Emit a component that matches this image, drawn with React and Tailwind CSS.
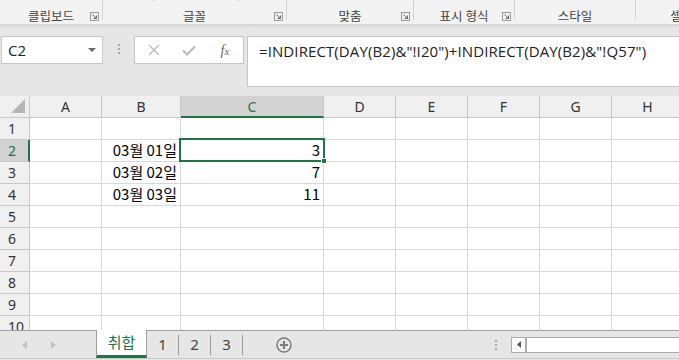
import React from 'react';

const COLS = [
  { key: 'A', w: 'w-[72px]' },
  { key: 'B', w: 'w-[79px]' },
  { key: 'C', w: 'w-[143px]' },
  { key: 'D', w: 'w-[72px]' },
  { key: 'E', w: 'w-[72px]' },
  { key: 'F', w: 'w-[72px]' },
  { key: 'G', w: 'w-[72px]' },
  { key: 'H', w: 'w-[72px]' },
];

const DATA = {
  2: { B: '03월 01일', C: '3' },
  3: { B: '03월 02일', C: '7' },
  4: { B: '03월 03일', C: '11' },
};

const GROUPS = [
  { label: '클립보드', w: 'w-[103px]', launcher: true },
  { label: '글꼴', w: 'w-[184px]', launcher: true },
  { label: '맞춤', w: 'w-[127px]', launcher: true },
  { label: '표시 형식', w: 'w-[101px]', launcher: true },
  { label: '스타일', w: 'w-[121px]', launcher: false },
  { label: '셀', w: 'w-[80px]', launcher: false },
];

const kr = { fontFamily: '"Noto Sans CJK KR", "Noto Sans", sans-serif' };

function Launcher() {
  return (
    <svg width="9" height="9" viewBox="0 0 9 9" className="absolute right-[3px] top-[12px]">
      <rect x="0.5" y="0.5" width="8" height="8" fill="none" stroke="#9a9a9a" />
      <path d="M2.5 2.5 L6.5 6.5 M6.5 3.5 V6.5 H3.5" stroke="#666" fill="none" />
    </svg>
  );
}

function Ribbon() {
  return (
    <div className="relative flex h-[24px] bg-[#f3f3f3]" style={kr}>
      {GROUPS.map((g, i) => (
        <div
          key={g.label}
          className={`relative ${g.w} h-[20px] shrink-0 ${i < GROUPS.length - 1 ? 'border-r border-[#d2d2d2]' : ''}`}
        >
          <div className="absolute inset-x-0 top-[8px] text-center text-[12.5px] leading-[16px] text-[#444]">
            {g.label}
          </div>
          {g.launcher && <Launcher />}
        </div>
      ))}
      <div className="absolute left-[153px] top-0 h-[2px] w-px bg-[#d2d2d2]" />
      <div className="absolute left-[238px] top-0 h-[2px] w-px bg-[#d2d2d2]" />
    </div>
  );
}

function FormulaBar() {
  return (
    <div className="flex h-[68px] items-start pt-[8px] pl-[1px]">
      <div className="flex h-[28px] w-[102px] items-center justify-between border border-[#c6c6c6] bg-white pl-[6px] pr-[6px]">
        <span className="text-[15px] text-[#222]" style={{ fontFamily: '"Open Sans", sans-serif' }}>C2</span>
        <svg width="8" height="5" viewBox="0 0 8 5"><path d="M0 0 H8 L4 4 Z" fill="#6a6a6a" /></svg>
      </div>
      <div className="flex w-[31px] flex-col items-center gap-[2px] pt-[8px]">
        <div className="h-[2px] w-[2px] bg-[#a8a8a8]" />
        <div className="h-[2px] w-[2px] bg-[#a8a8a8]" />
        <div className="h-[2px] w-[2px] bg-[#a8a8a8]" />
      </div>
      <div className="flex h-[28px] w-[110px] items-center border border-[#c6c6c6] bg-white">
        <div className="flex w-[36px] justify-center pl-[2px]">
          <svg width="12" height="12" viewBox="0 0 12 12"><path d="M1 1 L11 11 M11 1 L1 11" stroke="#bcbcbc" strokeWidth="1.4" /></svg>
        </div>
        <div className="flex w-[36px] justify-center">
          <svg width="14" height="11" viewBox="0 0 14 11"><path d="M1 5.5 L5 9.5 L13 1.5" stroke="#bcbcbc" strokeWidth="2.2" fill="none" /></svg>
        </div>
        <div className="flex w-[36px] justify-center">
          <span className="text-[14px] italic text-[#666]" style={{ fontFamily: '"Liberation Serif", serif' }}>
            f<span className="text-[11px]">x</span>
          </span>
        </div>
      </div>
      <div className="ml-[3px] h-[51px] flex-1 border border-r-0 border-[#c6c6c6] bg-white pl-[11px] pt-[2px]">
        <span className="text-[15px] tracking-[0.1px] text-[#222]" style={{ fontFamily: '"Open Sans", sans-serif' }}>
          =INDIRECT(DAY(B2)&amp;"!I20")+INDIRECT(DAY(B2)&amp;"!Q57")
        </span>
      </div>
    </div>
  );
}

function Grid() {
  const rows = [1, 2, 3, 4, 5, 6, 7, 8, 9, 10];
  return (
    <div className="relative h-[234px] overflow-hidden bg-white">
      {/* column headers */}
      <div className="flex h-[22px]">
        <div className="relative w-[30px] shrink-0 border-r border-b border-[#c8c8c8] bg-[#f0f0f0]">
          <svg width="16" height="16" viewBox="0 0 16 16" className="absolute right-[3px] bottom-[3px]">
            <path d="M15 1 V15 H1 Z" fill="#b5b5b5" />
          </svg>
        </div>
        {COLS.map((c) => (
          <div
            key={c.key}
            className={`${c.w} shrink-0 flex items-center justify-center border-r border-[#c8c8c8] text-[14px] ${
              c.key === 'C' ? 'bg-[#d2d2d2] border-b-2 border-b-[#217346] text-[#217346]' : 'bg-[#f0f0f0] border-b text-[#333]'
            }`}
            style={{ fontFamily: '"Noto Sans", sans-serif' }}
          >
            {c.key}
          </div>
        ))}
      </div>
      {rows.map((r) => (
        <div key={r} className="flex h-[22px]">
          <div
            className={`w-[30px] shrink-0 flex items-center pl-[8px] border-b border-[#c8c8c8] text-[14px] ${
              r === 2 ? 'bg-[#d2d2d2] border-r-2 border-r-[#217346] text-[#217346]' : 'bg-[#f0f0f0] border-r text-[#333]'
            }`}
            style={{ fontFamily: '"Noto Sans", sans-serif' }}
          >
            {r}
          </div>
          {COLS.map((c) => (
            <div
              key={c.key}
              className={`${c.w} shrink-0 flex items-center justify-end pr-[3px] border-r border-b border-[#d9d9d9] text-[15px] text-black`}
              style={kr}
            >
              {DATA[r] && DATA[r][c.key]}
            </div>
          ))}
        </div>
      ))}
      {/* active cell C2 */}
      <div className="absolute left-[179px] top-[42px] h-[24px] w-[146px] border-2 border-[#217346]" />
      <div className="absolute left-[321px] top-[62px] h-[6px] w-[6px] border border-white bg-[#217346]" />
    </div>
  );
}

function Tabs() {
  return (
    <div className="relative h-[30px] border-t border-[#a0a0a0] bg-[#e6e6e6]">
      <div className="flex h-[27px] items-stretch">
        <div className="flex w-[96px] items-center gap-[22px] pl-[22px]">
          <svg width="6" height="8" viewBox="0 0 6 8"><path d="M5 0 V8 L0 4 Z" fill="#c2c2c2" /></svg>
          <svg width="6" height="8" viewBox="0 0 6 8"><path d="M1 0 V8 L6 4 Z" fill="#c2c2c2" /></svg>
        </div>
        <div
          className="-mt-px flex w-[51px] items-center justify-center border-x border-[#a0a0a0] border-b-[3px] border-b-[#217346] bg-white text-[15px] text-[#217346]"
          style={kr}
        >
          취합
        </div>
        {['1', '2', '3'].map((t) => (
          <div key={t} className="flex w-[32px] items-center py-[4px]">
            <span className="flex-1 text-center text-[15px] text-[#444]" style={{ fontFamily: '"Noto Sans", sans-serif' }}>{t}</span>
            <div className="h-[20px] w-px bg-[#9a9a9a]" />
          </div>
        ))}
        <div className="flex w-[82px] items-center justify-center">
          <svg width="16" height="16" viewBox="0 0 16 16">
            <circle cx="8" cy="8" r="7" fill="none" stroke="#7a7a7a" strokeWidth="1.4" />
            <path d="M8 4 V12 M4 8 H12" stroke="#7a7a7a" strokeWidth="2" />
          </svg>
        </div>
        <div className="flex flex-1 items-center justify-end">
          <div className="mr-[14px] flex flex-col gap-[2px]">
            <div className="h-[2px] w-[2px] bg-[#a8a8a8]" />
            <div className="h-[2px] w-[2px] bg-[#a8a8a8]" />
            <div className="h-[2px] w-[2px] bg-[#a8a8a8]" />
          </div>
          <div className="flex h-[16px] w-[168px] border border-r-0 border-[#ababab] bg-white">
            <div className="flex w-[15px] items-center justify-center border-r-2 border-[#ababab]">
              <svg width="4" height="7" viewBox="0 0 4 7"><path d="M4 0 V7 L0 3.5 Z" fill="#555" /></svg>
            </div>
          </div>
        </div>
      </div>
      <div className="h-[2px] border-t border-[#c8c8c8]" />
    </div>
  );
}

export default function App() {
  return (
    <div className="flex h-[360px] w-[679px] flex-col overflow-hidden bg-[#e6e6e6]">
      <Ribbon />
      <div className="h-[4px] bg-gradient-to-b from-[#d4d4d4] to-[#e6e6e6]" />
      <FormulaBar />
      <Grid />
      <Tabs />
    </div>
  );
}
